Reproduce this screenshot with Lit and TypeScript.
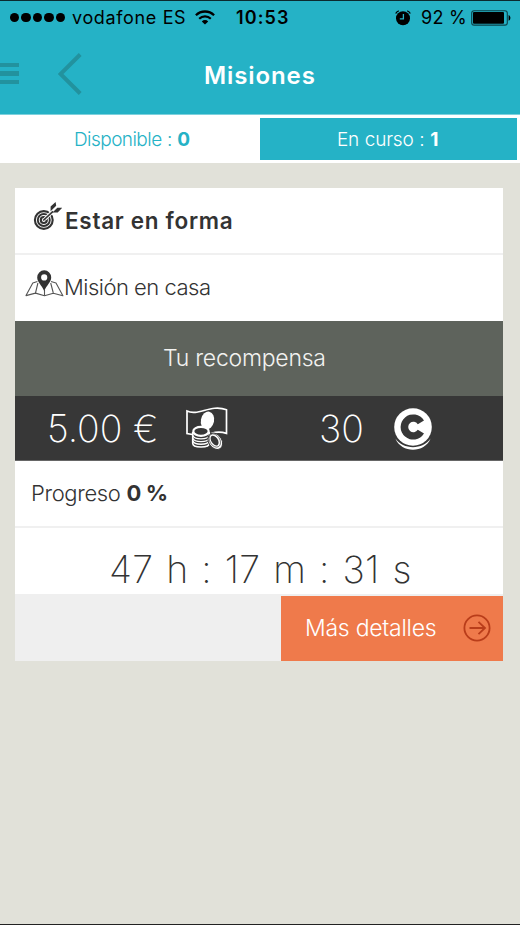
import { LitElement, html, css, svg } from "lit";
import { customElement } from "lit/decorators.js";

const wifi = html`<svg class="wifi" width="20" height="15" viewBox="0 0 20 15">
  <path d="M.9 5.2a13 13 0 0 1 18.2 0" fill="none" stroke="#000" stroke-width="2.3"/>
  <path d="M4.2 8.7a8.2 8.2 0 0 1 11.6 0" fill="none" stroke="#000" stroke-width="2.2"/>
  <path d="M6.8 11.4a4.6 4.6 0 0 1 6.4 0L10 14.6z"/>
</svg>`;

const alarm = html`<svg class="alarm" width="16" height="16" viewBox="0 0 16 16">
  <circle cx="8" cy="8.3" r="7"/>
  <path d="M.7 3.6A5 5 0 0 1 3.8.9M15.3 3.6A5 5 0 0 0 12.2.9" fill="none" stroke="#000" stroke-width="1.3"/>
  <path d="M8.4 4v4.8H4.8" fill="none" stroke="#25b2c6" stroke-width="1.3"/>
</svg>`;

const battery = html`<svg class="battery" width="40" height="16" viewBox="0 0 40 16">
  <rect x=".7" y=".7" width="35.6" height="14.4" rx="2.4" fill="none" stroke="#0b4149" stroke-width="1.1"/>
  <rect x="2" y="2" width="31" height="11.8" rx="1"/>
  <path d="M37.6 5c2.4.8 2.4 5 0 5.8z"/>
</svg>`;

const target = html`<svg class="target" width="29" height="29" viewBox="0 0 29 29">
  <circle cx="10.8" cy="18" r="8.9" fill="none" stroke="#333" stroke-width="2.1"/>
  <circle cx="10.8" cy="18" r="6" fill="none" stroke="#333" stroke-width="1.9"/>
  <circle cx="10.8" cy="18" r="3" fill="none" stroke="#333" stroke-width="2.2"/>
  <path d="M12 17 20.500 8.500" stroke="#fff" stroke-width="3.6"/>
  <path d="M10.2 18.500 20 9.400" stroke="#333" stroke-width="1.700"/>
  <path d="M17.600 9.200V4.600L22.600 0l.6 3.800zM19.500 10.400l4.800-4.600 4.900-.1-4.500 4.900z" fill="#333"/>
</svg>`;

const map = html`<svg class="map" width="39" height="27" viewBox="0 0 39 27">
  <path d="M12.4 11.4 7.8 13 1 25.6l9.5-2.500 9 2.700 8.800-2.600 9.600 2.600L31 13l-5-1.500M10.500 23l2.400-10M28.300 23l-2.600-10M19.500 20v6" fill="none" stroke="#555" stroke-width="1.1" stroke-linejoin="round"/>
  <path d="M19.200.3a7 7 0 0 0-7 7.100c0 4.800 4.600 7.500 7 13.600 2.400-6.100 7-8.800 7-13.600a7 7 0 0 0-7-7.100zm0 4a3.100 3.100 0 1 1 0 6.200 3.100 3.100 0 0 1 0-6.200z" fill="#333" fill-rule="evenodd"/>
</svg>`;

const stackLines = [28.4, 31.1, 33.8];
const money = html`<svg class="money" width="42" height="43" viewBox="0 0 42 43">
  <path d="M6.500 27.500 1 26.600V4.100C12 9.500 25-3.200 40.500 2.800v23.600c-5.500-1.900-10-1.700-15-.2" fill="none" stroke="#fff" stroke-width="1.700"/>
  <ellipse cx="21.500" cy="13.500" rx="6.600" ry="9" transform="rotate(12 21.500 13.500)" fill="#fff"/>
  <path d="M6 25v11.500c0 5 18 5 18 0V25z" fill="#373737"/>
  <path d="M6.700 25v11.200c0 5 16.600 5 16.600 0V25" fill="none" stroke="#fff" stroke-width="1.600"/>
  ${stackLines.map((y) => svg`<path d=${`M6.7 ${y}c1.5 4.6 15.1 4.6 16.6 0`} fill="none" stroke="#fff" stroke-width="1.3"/>`)}
  <ellipse cx="15" cy="24.300" rx="7.700" ry="4.500" fill="#373737" stroke="#fff" stroke-width="2.200"/>
  <ellipse cx="29.300" cy="34.300" rx="6.600" ry="8.800" transform="rotate(-33 29.300 34.300)" fill="#fff" stroke="#373737" stroke-width="1"/>
  <ellipse cx="28.800" cy="33.500" rx="5" ry="7.200" transform="rotate(-33 28.800 33.500)" fill="none" stroke="#373737" stroke-width=".6"/>
  <ellipse cx="28.600" cy="33.600" rx="3.200" ry="5.400" transform="rotate(-33 28.600 33.600)" fill="#373737"/>
</svg>`;

const coin = html`<svg class="coin" width="40" height="44" viewBox="0 0 40 44">
  <circle cx="20" cy="20" r="18.800" fill="#fff"/>
  <path d="M2.400 31.500C10 43 30 43 37.600 31.500 31.500 46.500 8.500 46.500 2.400 31.500z" fill="#fff"/>
  <path d="M31 13.500A12.600 12.600 0 1 0 31 26.500L24.800 22.800A5.200 5.200 0 1 1 24.800 17.200z" fill="#373737"/>
</svg>`;

const arrow = html`<svg class="arrow" width="28" height="28" viewBox="0 0 28 28" fill="none" stroke="#b93d1a" stroke-width="1.8">
  <circle cx="14" cy="14" r="12.600"/>
  <path d="M6.500 14h15.500M15.500 7.800 22 14l-6.500 6.200"/>
</svg>`;

@customElement("app-root")
export class AppRoot extends LitElement {
  static styles = css`
    :host {
      display: flex;
      flex-direction: column;
      box-sizing: border-box;
      height: 925px;
      border-top: 1px solid #0b2a30;
      border-bottom: 1px solid #222;
      background: #e1e1d9;
      color: #333;
      font-family: Inter, "Liberation Sans", sans-serif;
      font-weight: 300;
      white-space: nowrap;
      overflow: hidden;
    }
    svg, span { display: block; flex: none; }
    b { font-weight: 700; }
    .status, .nav, .tabs, .card { flex: none; }
    .status { display: flex; align-items: center; box-sizing: border-box; height: 34px; padding-bottom: 1px; background: #25b2c6; color: #000; font-size: 18px; font-weight: 400; }
    .dots { display: flex; gap: 2.3px; margin-left: 10px; width: 62px; }
    .dot { width: 9.2px; height: 9.2px; border-radius: 50%; background: #000; }
    .carrier { width: 123px; letter-spacing: .65px; }
    .wifi { margin-right: 21px; }
    .clock { width: 159px; font-weight: 600; letter-spacing: 1.1px; }
    .charge { width: 50px; margin-left: 10px; letter-spacing: .3px; }
    .nav { display: flex; align-items: center; box-sizing: border-box; height: 80px; padding-bottom: 2px; background: #25b2c6; border-bottom: 1px solid #7dd1dd; }
    .menu { display: flex; flex-direction: column; gap: 4.5px; width: 19px; margin-right: 39px; }
    .bar { height: 4.3px; background: #22929e; }
    .title { margin: 3px 0 0 122px; font-size: 24px; font-weight: 600; color: #fff; letter-spacing: .9px; }
    .tabs { display: flex; box-sizing: border-box; height: 48px; padding: 3px 3px 3px 0; background: #fff; font-size: 19px; line-height: 43px; }
    .tab { box-sizing: border-box; width: 260px; height: 42px; padding-left: 74px; color: #25b2c6; letter-spacing: -.55px; word-spacing: .6px; }
    .tab.active { width: 257px; padding-left: 77px; background: #25b2c6; color: #fff; letter-spacing: -.2px; }
    .card { width: 488px; margin: 25px 0 0 15px; background: #fff; }
    .row { display: flex; align-items: center; box-sizing: border-box; }
    .heading { height: 67px; border-bottom: 2px solid #f0f0f0; padding-left: 18px; font-size: 22.5px; font-weight: 560; letter-spacing: .7px; }
    .target { margin: -9px 3px 0 0; }
    .place { height: 66px; padding: 0 0 2px 10px; font-size: 22px; letter-spacing: -.5px; }
    .map { margin: -8px 0 0; }
    .reward { height: 75px; padding: 0 0 1px 148px; background: #5e635c; color: #f2f2f0; font-size: 23px; letter-spacing: -.25px; }
    .amounts { height: 65px; padding-left: 32px; background: #373737; border-bottom: 1px solid #666; color: #fff; font-size: 37.5px; font-weight: 250; }
    .cash { width: 139px; }
    .points { width: 74px; margin-left: 91px; }
    .coin { margin-top: 2px; }
    .progress { height: 67px; padding: 0 0 1px 16px; border-bottom: 2px solid #f0f0f0; font-size: 22px; letter-spacing: -.35px; }
    .timer { height: 66px; padding: 17px 0 0 94px; font-size: 37.5px; font-weight: 250; letter-spacing: .3px; word-spacing: 2px; }
    .foot { display: flex; justify-content: flex-end; height: 67px; box-sizing: border-box; padding-top: 2px; background: #efefef; }
    .details { display: flex; align-items: center; width: 222px; box-sizing: border-box; padding: 0 0 1px 24px; background: #ef7a4b; color: #fff; font-size: 23px; letter-spacing: -.25px; }
    .label { width: 158px; }
  `;

  render() {
    return html`
      <div class="status">
        <div class="dots">${[0, 1, 2, 3, 4].map(() => html`<i class="dot"></i>`)}</div>
        <span class="carrier">vodafone ES</span>${wifi}
        <span class="clock">10:53</span>${alarm}
        <span class="charge">92 %</span>${battery}
      </div>
      <div class="nav">
        <div class="menu"><i class="bar"></i><i class="bar"></i><i class="bar"></i></div>
        <svg width="24" height="42" viewBox="0 0 24 42"><path d="M22.2 1.5 2.5 21 22.2 40.5" fill="none" stroke="#22929e" stroke-width="4"/></svg>
        <span class="title">Misiones</span>
      </div>
      <div class="tabs">
        <div class="tab">Disponible : <b>0</b></div>
        <div class="tab active">En curso : <b>1</b></div>
      </div>
      <div class="card">
        <div class="row heading">${target}<span class="name">Estar en forma</span></div>
        <div class="row place">${map}<span class="where">Misión en casa</span></div>
        <div class="row reward"><span>Tu recompensa</span></div>
        <div class="row amounts"><span class="cash">5.00 €</span>${money}<span class="points">30</span>${coin}</div>
        <div class="row progress"><span>Progreso <b>0 %</b></span></div>
        <div class="row timer"><span>47 h : 17 m : 31 s</span></div>
        <div class="foot"><div class="details"><span class="label">Más detalles</span>${arrow}</div></div>
      </div>
    `;
  }
}
